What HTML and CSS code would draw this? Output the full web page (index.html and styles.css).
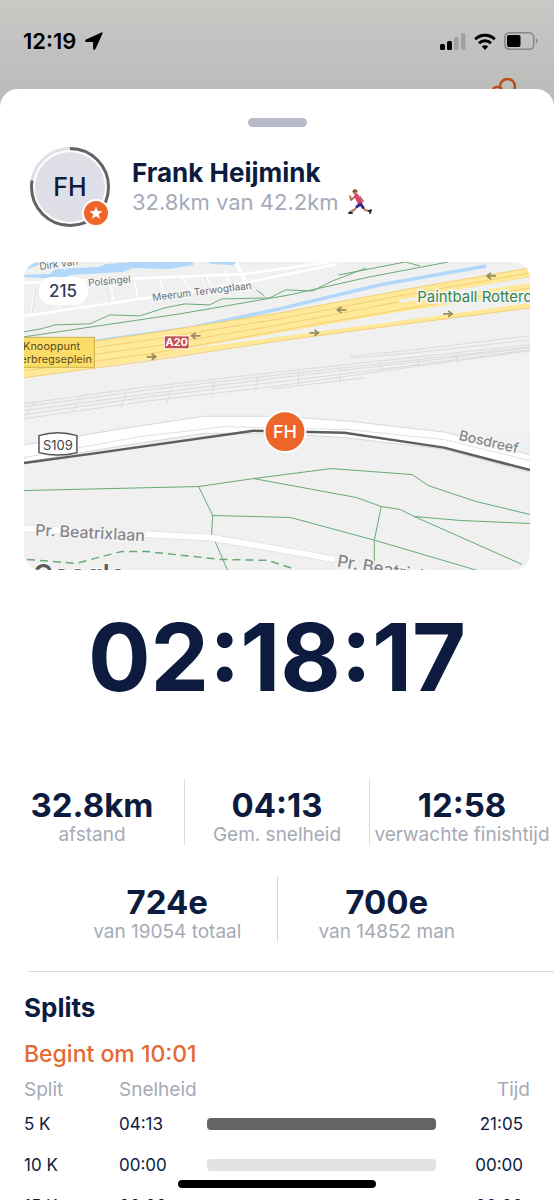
FILE: index.html
```html
<!doctype html>
<html lang="nl">
<head>
    <meta charset="utf-8">
    <meta name="viewport" content="width=device-width, initial-scale=1">
    <title>Frank Heijmink</title>
    <link rel="stylesheet" href="styles.css">
</head>

<body>
<div class="statusbar">
    <span class="clock">12:19</span>
    <svg class="location" width="18" height="18" viewBox="0 0 18 18"><path d="M16.500.4 1 7.600c-1.300.6-1 2.300.4 2.300h6.200c.3 0 .5.2.5.5v6.100c0 1.500 1.800 1.800 2.400.5L17.500 1.500c.3-.8-.3-1.400-1-1.100z"/></svg>
    <div class="status-icons">
        <svg width="26" height="17" viewBox="0 0 26 17"><rect y="11" width="5" height="6" rx="1.500"/><rect x="7" y="8" width="5" height="9" rx="1.500"/><g fill="#a0a29f"><rect x="14" y="4" width="4.500" height="13" rx="1.500"/><rect x="21" width="4.500" height="17" rx="1.500"/></g></svg>
        <svg width="22" height="17" viewBox="0 0 22 17"><g fill="none" stroke="#000" stroke-width="3"><path d="M1.200 6.200a14 14 0 0 1 19.600 0"/><path d="M5 10.200a8.600 8.600 0 0 1 12 0"/></g><path d="M11 17l-3.200-3.400a4.500 4.500 0 0 1 6.400 0z"/></svg>
        <svg width="34" height="18" viewBox="0 0 34 18"><rect x=".8" y=".8" width="29" height="16.400" rx="4.500" fill="none" stroke="#858785" stroke-width="1.500"/><rect x="3" y="3" width="13.500" height="12" rx="2"/><path d="M32 6.500c2 .8 2 4.200 0 5z" fill="#858785"/></svg>
    </div>
    <svg class="behind" width="26" height="20" viewBox="0 0 26 20"><g fill="none" stroke="#bd4c17" stroke-width="2.600"><circle cx="15.500" cy="8.500" r="7.500"/><path d="M1 11c2-3 6-3 9 0"/></g></svg>
</div>

<main class="sheet">
    <div class="handle"></div>
    <header class="runner">
        <div class="avatar">
            <svg width="80" height="80" viewBox="0 0 80 80">
                <circle cx="40" cy="40" r="38.500" fill="none" stroke="#dfe0e5" stroke-width="3"/>
                <circle cx="40" cy="40" r="38.500" fill="none" stroke="#646464" stroke-width="3" pathLength="100" stroke-dasharray="77.700 100" transform="rotate(-90 40 40)"/>
                <circle cx="40" cy="40" r="35" fill="#dfe0e7"/>
            </svg>
            <span class="initials">FH</span>
            <svg class="star" width="28" height="28" viewBox="0 0 28 28"><circle cx="14" cy="14" r="13" fill="#ed6529" stroke="#fff" stroke-width="2"/><path d="M14 7.500l1.700 4.500 4.800.2-3.800 3 1.300 4.600-4-2.600-4 2.600 1.300-4.600-3.800-3 4.800-.2z" fill="#fff"/></svg>
        </div>
        <div>
            <h1>Frank Heijmink</h1>
            <div class="progress-text">32.8km van 42.2km
                <svg width="24" height="26" viewBox="0 0 24 26">
                    <g fill="none" stroke-linecap="round" stroke-linejoin="round">
                        <path d="M8 7l-5 4-1-4M12 8l3 4-3 2" stroke="#a9704f" stroke-width="1.800"/>
                        <path d="M9 18l-3 3-4 2M14 17l3 4 4 1" stroke="#b27a55" stroke-width="2"/>
                        <path d="M8.500 7l3.500 7" stroke="#e23b72" stroke-width="4.500"/>
                        <path d="M12 15.500l-3 2M13 15.500l2 3" stroke="#312a91" stroke-width="3"/>
                        <path d="M1 24h3M21 22l2-1-1 3" stroke="#252530" stroke-width="1.800"/>
                    </g>
                    <circle cx="7" cy="3" r="2.400" fill="#b27a55"/>
                    <path d="M4.500 3c0-4 5-3.500 5-.5z" fill="#80502f"/>
                </svg>
            </div>
        </div>
    </header>

    <div class="map">
        <svg viewBox="24 262 507 309">
            <rect x="24" y="262" width="507" height="309" fill="#f0f0f0"/>
            <path d="M24 415L210 390 531 345 531 435 440 432 280 415 24 440z" fill="#f2f2f2"/>

            <!-- residential streets -->
            <g fill="none" stroke="#fff">
                <path d="M24 283L245 274 330 262M24 316L140 299 250 282 338 264" stroke-width="2.500"/>
                <path d="M236 262l11 22" stroke-width="4"/>
                <path d="M35 289l-4 25M56 282l4 28M107 285l3 18M111 285l3 18M134 277l4 22M157 281l3 17M161 281l4 16M183 278l8 14M203 278l6 13M207 277l6 12M225 270l6 16M80 282l-2 24M105 262l2 7M115 262l1 7" stroke-width="1.500"/>
            </g>
            <g fill="none" stroke="#dcdee0">
                <path d="M36 289l-4 24M107 286l3 17M157 282l3 16M204 278l5 12M105 263l2 5"/>
            </g>

            <!-- water -->
            <path d="M24 275l26-1 5-5 44-2 7-3 26-2h61l1 3-25 4-36-1-10 4-52 3-10 4-37-2z" fill="#b1d8fb"/>
            <path d="M24 262h20l-8 4-12 4zM208 262h30l-5 3-21-1z" fill="#b1d8fb"/>
            <path d="M92 342L190 328 280 309 380 285 487 266" fill="none" stroke="#b1d8fb" stroke-width="3.500"/>

            <!-- footpaths -->
            <g fill="none" stroke="#6aaa78">
                <path d="M24 332l17-3 14-4 35-1 20-9 30 1 25-8 20-4 25 1 12-6 48-1 16-8 27 1 20-10 34-13M339 275l67-13 15 4M24 337L180 314 290 295 370 277 449 262M257 290l8 6"/>
            </g>

            <!-- motorway -->
            <path d="M24 351L140 335 280 313 420 287 531 268V308L400 325 280 341 24 378z" fill="#ffe898"/>
            <g fill="none" stroke="#f3cf74">
                <path d="M24 351L140 335 280 313 420 287 531 268M24 378L150 361 280 341 400 325 531 308M24 358L150 340 280 319 400 296 531 273M24 364L150 347 280 325 400 302 531 277M24 371L150 354 280 331 400 310 531 288"/>
            </g>
            <path d="M400 300L531 277V283L400 303zM180 350L280 333 400 312 531 293V303L400 321 280 337z" fill="#f0f0f0"/>
            <g fill="none" stroke="#9a8d62" stroke-width="1.800">
                <path d="M147 357h9m-4-3l4 3-4 3M310 333h9m-4-3l4 3-4 3M444 314h9m-4-3l4 3-4 3M201 336h-9m4-3l-4 3 4 3M347 310h-9m4-3l-4 3 4 3M497 276h-9m4-3l-4 3 4 3"/>
            </g>

            <!-- railway yard -->
            <g fill="none" stroke="#d9dadd">
                <path d="M24 404L140 388 280 372 410 358 531 345M24 407L150 390 280 375 410 361 531 347M24 411L150 394 280 378 410 363 531 348M24 415L150 397 280 382 410 366 531 350M24 419L150 401 280 386 400 369 531 351"/>
                <path d="M352 356l54-5 125-15M352 358l54-4 125-14M352 356v2M274 389l91-11"/>
                <path d="M34 403l-9 13M81 396l-8 16M127 391l-6 17M172 387l-5 17M215 382l-3 16M258 376l-2 15M299 371v15M341 370v13M380 362l2 10M419 358v9M457 355l1 8M494 350l1 7"/>
            </g>

            <!-- provincial road and covered route -->
            <g fill="none" stroke-linejoin="round">
                <path d="M24 454L120 438 205 425 280 425 350 430 445 441 531 464" stroke="#d7d8dd" stroke-width="18"/>
                <path d="M24 454L120 438 205 425 280 425 350 430 445 441 531 464" stroke="#fff" stroke-width="16"/>
                <path d="M24 458L140 437 225 427 350 430 445 440 531 461" stroke="#e0e1e4"/>
                <path d="M24 463.500L100 453 254 431 345 433 445 448 531 470.500" stroke="#5e5e5e" stroke-width="2.500"/>
            </g>

            <!-- park -->
            <g fill="none" stroke="#65aa72">
                <path d="M24 491l175-4 55-8 78-10 81 6 16 11 48 16 54 13M199 487l14 29-1 18 16 37M254 479l103 19 25 9 19 3 14 7 46 4 70 3M415 517l108 48M213 516l78 2 85 23 102 30M382 507l-7 34v30"/>
            </g>
            <g fill="none">
                <path d="M24 529l126 6 60 3 70 12 55 10" stroke="#d7d8dd" stroke-width="7"/>
                <path d="M24 529l126 6 60 3 70 12 55 10" stroke="#fff" stroke-width="6"/>
                <path d="M27 560l49 4 46-12 24 0 75 8 47 1 28 9" stroke="#65aa72" stroke-width="1.500" stroke-dasharray="8 5"/>
            </g>

            <!-- labels -->
            <g class="map-text">
                <text transform="translate(40 270) rotate(-8)" font-size="10">Dirk van</text>
                <text transform="translate(80 287) rotate(-5)" font-size="10">n Polsingel</text>
                <text transform="translate(153 301) rotate(-7)" font-size="10">Meerum Terwogtlaan</text>
                <text x="418" y="302" font-size="15" fill="#38864d">Paintball Rotterdam</text>
                <text class="map-street" transform="translate(35 536) rotate(3)" font-size="16">Pr. Beatrixlaan</text>
                <text class="map-street" transform="translate(337 567) rotate(10)" font-size="17">Pr. Beatrixlaan</text>
                <text class="map-street" transform="translate(459 440) rotate(13)" font-size="14">Bosdreef</text>
            </g>
            <rect x="20" y="337.500" width="74.500" height="30" fill="#fbdc68" stroke="#cbb14e"/>
            <g class="map-sign">
                <text x="23" y="350" font-size="11">Knooppunt</text>
                <text x="92" y="363" font-size="11" text-anchor="end">Terbregseplein</text>
            </g>
            <rect x="164.500" y="336" width="25" height="13" fill="#c3504f" stroke="#fff"/>
            <text class="map-shield" x="177" y="346.500" font-size="11">A20</text>
            <path d="M39 436q19-6 38 0v17q-19 5-38 0z" fill="#fff" stroke="#555" stroke-width="1.500"/>
            <text class="map-road" x="58" y="450" font-size="13">S109</text>
            <text class="map-logo" x="33" y="585" font-size="27">Google</text>

            <rect x="39" y="277" width="49" height="28" rx="13" fill="#fff"/>
            <text class="map-number" x="63" y="297" font-size="17">215</text>
            <circle cx="285.500" cy="432" r="20.500" fill="#ed6529" stroke="#fff" stroke-width="2"/>
            <text class="map-pin" x="285.500" y="438" font-size="18">FH</text>
        </svg>
    </div>

    <div class="timer">02:18:17</div>

    <div class="stats">
        <div class="stat"><strong>32.8km</strong><span>afstand</span></div>
        <div class="stat"><strong>04:13</strong><span>Gem. snelheid</span></div>
        <div class="stat"><strong>12:58</strong><span>verwachte finishtijd</span></div>
    </div>
    <div class="stats ranking">
        <div class="stat"><strong>724e</strong><span>van 19054 totaal</span></div>
        <div class="stat"><strong>700e</strong><span>van 14852 man</span></div>
    </div>

    <section class="splits">
        <h2>Splits</h2>
        <p class="start">Begint om 10:01</p>
        <table>
            <thead>
                <tr><th class="col-split">Split</th><th class="col-speed">Snelheid</th><th></th><th class="col-time">Tijd</th></tr>
            </thead>
            <tbody>
                <tr><td>5 K</td><td>04:13</td><td><div class="bar done"></div></td><td class="time">21:05</td></tr>
                <tr><td>10 K</td><td>00:00</td><td><div class="bar"></div></td><td class="time">00:00</td></tr>
                <tr><td>15 K</td><td>00:00</td><td><div class="bar"></div></td><td class="time">00:00</td></tr>
            </tbody>
        </table>
    </section>
</main>
<div class="home-indicator"></div>
</body>

</html>
```
FILE: styles.css
```css
* {box-sizing: border-box;}
body {font-family: Inter, 'Liberation Sans', sans-serif; margin: 0; height: 100vh; overflow: hidden; color: #0d1b3f; background: #fff;}
h1, h2, p {margin: 0;}
svg {display: block;}

.statusbar {position: relative; height: 109px; padding: 28px 16px 0 23px; display: flex; align-items: flex-start; background: linear-gradient(#c8c8c5, #b9bbb9); color: #000;}
.clock {font-size: 22px; line-height: 26px; font-weight: 600;}
.location {margin: 4px 0 0 9px;}
.status-icons {display: flex; gap: 8px; align-items: center; margin: 4px 0 0 auto;}
.behind {position: absolute; right: 36px; top: 78px;}

.sheet {position: relative; margin-top: -20px; background: #fff; border-radius: 18px 18px 0 0; padding-top: 29px;}
.handle {width: 59px; height: 9px; border-radius: 5px; background: #b8bcca; margin: 0 auto;}

.runner {display: flex; align-items: center; gap: 22px; padding: 20px 24px 0 30px;}
.avatar {position: relative; width: 80px; height: 80px;}
.initials {position: absolute; top: 0; left: 0; width: 80px; line-height: 80px; text-align: center; font-size: 25px; font-weight: 500;}
.star {position: absolute; right: 0; bottom: 0;}
h1 {font-size: 26px; line-height: 30px; font-weight: 700;}
.progress-text {display: flex; align-items: center; gap: 9px; font-size: 22px; line-height: 28px; color: #a6aab9;}

.map {margin: 35px 24px 0; border-radius: 16px; overflow: hidden;}
.map svg {width: 100%;}
.map-text {fill: #6e7177; stroke: #f5f5f5; stroke-width: 3px; paint-order: stroke;}
.map-street {fill: #85868c; font-weight: 500;}
.map-sign {fill: #5c4e22;}
.map-shield {fill: #fff; font-weight: 700; text-anchor: middle;}
.map-road {fill: #444; text-anchor: middle;}
.map-logo {fill: #5d5d5d; stroke: #fff; stroke-width: 2px; paint-order: stroke; font-weight: 600;}
.map-number {fill: #343b5b; font-weight: 500; text-anchor: middle;}
.map-pin {fill: #fff; font-weight: 500; text-anchor: middle;}

.timer {margin-top: 33px; text-align: center; font-size: 93px; line-height: 108px; font-weight: 700;}

.stats {display: flex; margin-top: 68px;}
.stat {flex: 1 1 0; min-width: 0; height: 66px; padding-top: 10px; display: flex; flex-direction: column; align-items: center; white-space: nowrap;}
.stat + .stat {border-left: 1px solid #d8dadf;}
.stat strong {font-size: 33px; line-height: 32px; font-weight: 700;}
.stat span {font-size: 19px; line-height: 28px; color: #a6aab6;}
.ranking {margin: 31px 58px 0;}

.splits {margin: 29px 0 0 29px; border-top: 1px solid #d8dae0;}
.splits h2, .start, .splits table {margin-left: -5px;}
.splits h2 {padding-top: 20px; font-size: 26px; line-height: 32px; font-weight: 700;}
.start {padding-top: 16px; font-size: 23px; line-height: 28px; font-weight: 500; color: #e46a33;}
table {width: calc(100% - 19px); table-layout: fixed; border-collapse: collapse;}
th {height: 35px; padding: 8px 0 0; font-size: 19px; line-height: 22px; font-weight: 400; text-align: left; color: #a6aab6;}
td {height: 41px; padding: 0; font-size: 17px; line-height: 22px;}
.col-split {width: 95px;}
.col-speed {width: 88px;}
.col-time {width: 94px; text-align: right;}
.time {padding-right: 7px; text-align: right;}
.bar {height: 12px; border-radius: 4px; background: #e2e2e5;}
.bar.done {background: #646464;}

.home-indicator {position: fixed; left: 50%; bottom: 12px; width: 198px; height: 8px; margin-left: -99px; border-radius: 4px; background: #000;}
```
